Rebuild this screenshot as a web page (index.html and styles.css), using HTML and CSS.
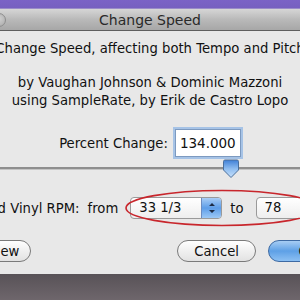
FILE: index.html
```html
<!doctype html>
<html lang="en">
  <head>
    <meta charset="utf-8" />
    <title>Change Speed</title>
    <link rel="stylesheet" href="styles.css">
  </head>
  <body>
    <div class="desk"></div>
    <div class="window">
      <div class="titleBar">
        <span class="closeBtn"></span>
        <span class="title">Change Speed</span>
      </div>
      <div class="content">
        <p class="heading">Change Speed, affecting both Tempo and Pitch</p>
        <p class="credits">by Vaughan Johnson &amp; Dominic Mazzoni<br />using SampleRate, by Erik de Castro Lopo</p>
        <div class="percentRow">
          <label for="percent">Percent Change:</label>
          <input id="percent" type="text" value="134.000" />
        </div>
        <div class="slider">
          <div class="track"></div>
          <svg class="thumb" width="20" height="20" viewBox="0 0 20 20">
            <defs>
              <linearGradient id="thumbFill" x1="0" y1="0" x2="0" y2="1">
                <stop offset="0" stop-color="#3f7fd6" />
                <stop offset="0.5" stop-color="#8fbdf0" />
                <stop offset="1" stop-color="#c6e0fb" />
              </linearGradient>
            </defs>
            <path d="M2.5 2.5 Q2.5 1 4 1 H16 Q17.5 1 17.5 2.5 V11 L10 18.5 L2.5 11 Z" fill="url(#thumbFill)" stroke="#4a6f9c" stroke-width="1" />
          </svg>
        </div>
        <div class="rpmRow">
          <span class="rpmLabel">Standard Vinyl RPM:</span>
          <span class="word">from</span>
          <span class="popup">
            <span class="popupText">33 1/3</span>
            <span class="stepper">
              <svg width="10" height="14" viewBox="0 0 10 14">
                <path d="M2 5 L5 2 L8 5 Z M2 9 L5 12 L8 9 Z" fill="#1d2b44" />
              </svg>
            </span>
          </span>
          <span class="word">to</span>
          <span class="popup short"><span class="popupText">78</span></span>
          <svg class="ring" width="200" height="40" viewBox="0 0 200 40">
            <ellipse cx="100" cy="20" rx="96" ry="17.5" fill="none" stroke="#c8262c" stroke-width="1.6" />
          </svg>
        </div>
        <div class="buttons">
          <button class="btn">Preview</button>
          <span class="spacer"></span>
          <button class="btn">Cancel</button>
          <button class="btn primary">OK</button>
        </div>
      </div>
    </div>
    <div class="dock"></div>
  </body>
</html>
```
FILE: styles.css
```css
* {
  box-sizing: border-box;
}
body {
  margin: 0;
  width: 300px;
  height: 300px;
  overflow: hidden;
  background: #6d6569;
  font-family: "DejaVu Sans", Verdana, sans-serif;
  color: #111;
}
.desk {
  height: 9px;
  background: linear-gradient(#7b63c6, #7760c0);
  border-bottom: 1px solid #9a8cc8;
}
.window {
  width: 360px;
  margin-left: -30px;
  background: #e8e8e8;
}
/* title bar */
.titleBar {
  position: relative;
  height: 22px;
  background: linear-gradient(#d6d6d6, #b9b9b9 50%, #a7a7a7);
  border-bottom: 1px solid #5e5e5e;
  display: flex;
  align-items: center;
  justify-content: center;
}
.title {
  font-size: 14px;
  color: #2a2a2a;
}
.closeBtn {
  position: absolute;
  left: 22px;
  top: 4px;
  width: 14px;
  height: 14px;
  border-radius: 50%;
  border: 1px solid #8d8d8d;
  background: radial-gradient(circle at 50% 40%, #d0d0d0, #a9a9a9);
}
.content {
  padding-top: 9px;
  text-align: center;
  font-size: 13.2px;
}
.content p {
  margin: 0;
}
.heading {
  line-height: 18px;
}
.credits {
  margin-top: 16px !important;
  line-height: 18px;
}
/* percent field */
.percentRow {
  margin-top: 19px;
  display: flex;
  justify-content: center;
  align-items: center;
  gap: 7px;
}
.percentRow input {
  width: 66px;
  height: 28px;
  font: inherit;
  font-size: 13.5px;
  padding: 0 4px;
  border: 1px solid #7d9ac0;
  box-shadow: 0 0 0 2px #a6c3e6;
  outline: none;
  color: #111;
}
.slider {
  position: relative;
  height: 20px;
  margin-top: 2px;
}
.track {
  position: absolute;
  left: 0;
  right: 0;
  top: 8px;
  height: 3px;
  background: #8e8e8e;
  border-bottom: 1px solid #c4c4c4;
}
.thumb {
  position: absolute;
  left: 251px;
  top: 0;
}
/* rpm row */
.rpmRow {
  position: relative;
  margin-top: 17px;
  display: flex;
  align-items: center;
  height: 24px;
  white-space: nowrap;
}
.rpmLabel {
  flex-shrink: 0;
  margin-left: -24px;
  margin-right: 8px;
}
.word {
  flex-shrink: 0;
  margin-right: 10px;
}
.word + .popup {
  margin-left: 2px;
}
.popup {
  flex-shrink: 0;
  display: flex;
  align-items: stretch;
  width: 92px;
  height: 22px;
  border: 1px solid #9a9a9a;
  border-radius: 4px;
  background: linear-gradient(#ffffff, #eeeeee);
  margin-right: 8px;
  text-align: left;
}
.popupText {
  flex: 1;
  padding: 2px 0 0 8px;
  font-size: 13.2px;
}
.stepper {
  width: 20px;
  border-left: 1px solid #6d8cc0;
  border-radius: 0 3px 3px 0;
  background: linear-gradient(#a9cdf6, #5d9de8 50%, #9cc8f5);
  display: flex;
  align-items: center;
  justify-content: center;
}
.popup.short {
  width: 80px;
}
.ring {
  position: absolute;
  left: 152px;
  top: -8px;
}
/* buttons */
.buttons {
  display: flex;
  align-items: center;
  gap: 12px;
  margin-top: 20px;
  padding-bottom: 12px;
}
.btn {
  flex-shrink: 0;
  height: 22px;
  border-radius: 11px;
  border: 1px solid #7a7a7a;
  background: linear-gradient(#ffffff, #f0f0f0 50%, #e2e2e2);
  font: inherit;
  font-size: 13.2px;
  color: #111;
  padding: 0 16px;
}
.buttons .btn:first-child {
  margin-left: -19px;
  width: 80px;
}
.spacer {
  flex: 1;
}
.btn.primary {
  width: 80px;
  margin-right: -18px;
  background: linear-gradient(#a7cdf4, #5ea0e6 50%, #8cc0f3);
  border-color: #3d6aa3;
}
.dock {
  height: 40px;
  background: linear-gradient(#585257, #7a7177);
}
```
